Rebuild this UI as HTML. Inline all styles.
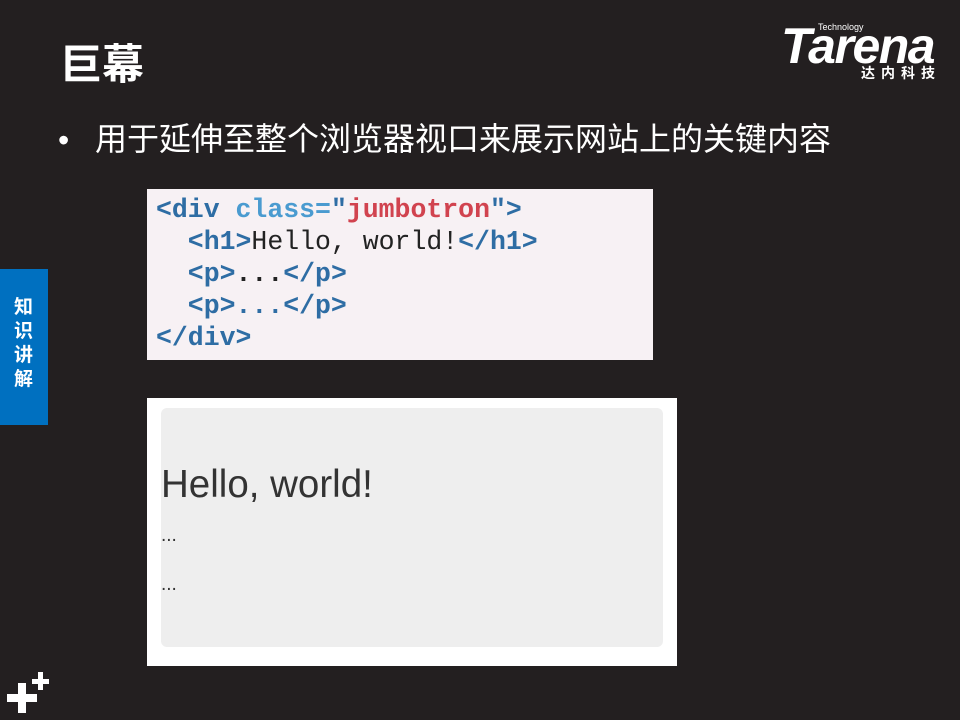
<!DOCTYPE html>
<html><head><meta charset="utf-8"><style>
body{margin:0;width:960px;height:720px;background:#231f20;position:relative;overflow:hidden;font-family:"Liberation Sans","Noto Sans CJK SC",sans-serif}
.a{position:absolute}
.k{color:#2e6da4}.c{color:#4a9bd0}.s{color:#d1434f}.t{color:#222;font-weight:normal}
</style></head><body>
<div class="a" style="left:60px;top:37px;font-size:42px;font-weight:bold;color:#fff;line-height:56px">巨幕</div>
<div class="a" style="left:58px;top:120px;font-size:32px;color:#fff;line-height:40px">•</div>
<div class="a" style="left:95px;top:119px;font-size:32px;color:#fff;line-height:40px;white-space:nowrap">用于延伸至整个浏览器视口来展示网站上的关键内容</div>
<div class="a" style="left:781px;top:21px;font-size:50px;font-weight:bold;font-style:italic;color:#fff;letter-spacing:-1.5px;line-height:50px">Tarena</div>
<div class="a" style="left:818px;top:22px;font-size:9px;color:#fff">Technology</div>
<div class="a" style="left:861px;top:63px;font-size:14px;font-weight:bold;color:#fff;letter-spacing:6px">达内科技</div>
<div class="a" style="left:0;top:269px;width:48px;height:156px;background:#0070c0"></div>
<div class="a" style="left:14px;top:296px;width:20px;font-size:19px;font-weight:bold;color:#fff;line-height:24px">知识讲解</div>
<div class="a" style="left:147px;top:189px;width:506px;height:171px;background:#f7f1f4"></div>
<pre class="a" style="left:156px;top:194px;margin:0;font-family:'Liberation Mono',monospace;font-size:26.5px;font-weight:bold;line-height:32px;color:#2e6da4"><span class="k">&lt;div </span><span class="c">class=</span><span class="k">"</span><span class="s">jumbotron</span><span class="k">"&gt;</span>
  &lt;h1&gt;<span class="t">Hello, world!</span>&lt;/h1&gt;
  &lt;p&gt;<span style="color:#222">...</span>&lt;/p&gt;
  &lt;p&gt;...&lt;/p&gt;
&lt;/div&gt;</pre>
<div class="a" style="left:147px;top:398px;width:530px;height:268px;background:#fff"></div>
<div class="a" style="left:161px;top:408px;width:502px;height:239px;background:#eee;border-radius:6px"></div>
<div class="a" style="left:161px;top:462px;font-size:38.5px;color:#333;line-height:46px">Hello, world!</div>
<div class="a" style="left:161px;top:525px;font-size:19px;color:#333">...</div>
<div class="a" style="left:161px;top:574px;font-size:19px;color:#333">...</div>
<div class="a" style="left:7px;top:694px;width:30px;height:8px;background:#fff"></div>
<div class="a" style="left:18px;top:683px;width:8px;height:30px;background:#fff"></div>
<div class="a" style="left:32px;top:679px;width:17px;height:5px;background:#fff"></div>
<div class="a" style="left:38px;top:672px;width:5px;height:18px;background:#fff"></div>
</body></html>
